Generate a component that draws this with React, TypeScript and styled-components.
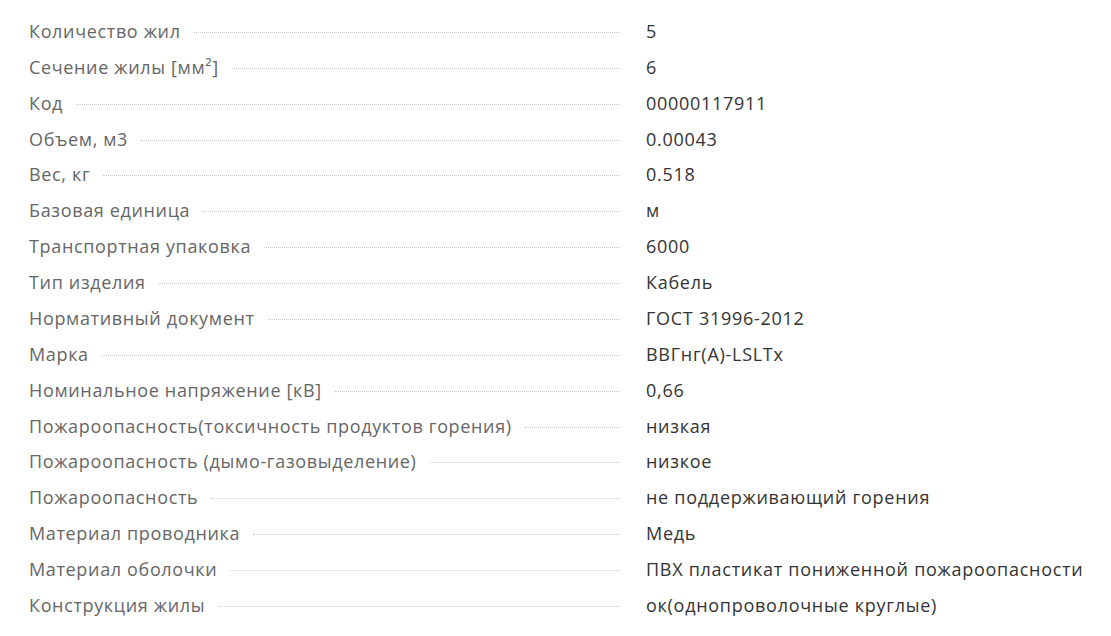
import styled, { createGlobalStyle } from "styled-components";

const GlobalStyle = createGlobalStyle`
  body {
    margin: 0;
    background: #fff;
    font-family: "Open Sans", "Noto Sans", sans-serif;
  }
`;

const specs: [string, string][] = [
  ["Количество жил", "5"],
  ["Сечение жилы [мм²]", "6"],
  ["Код", "00000117911"],
  ["Объем, м3", "0.00043"],
  ["Вес, кг", "0.518"],
  ["Базовая единица", "м"],
  ["Транспортная упаковка", "6000"],
  ["Тип изделия", "Кабель"],
  ["Нормативный документ", "ГОСТ 31996-2012"],
  ["Марка", "ВВГнг(А)-LSLTx"],
  ["Номинальное напряжение [кВ]", "0,66"],
  ["Пожароопасность(токсичность продуктов горения)", "низкая"],
  ["Пожароопасность (дымо-газовыделение)", "низкое"],
  ["Пожароопасность", "не поддерживающий горения"],
  ["Материал проводника", "Медь"],
  ["Материал оболочки", "ПВХ пластикат пониженной пожароопасности"],
  ["Конструкция жилы", "ок(однопроволочные круглые)"],
];

export default function App() {
  return (
    <>
      <GlobalStyle />
      <SpecList>
        {specs.map(([name, value]) => (
          <Row key={name}>
            <Name>
              <NameText>{name}</NameText>
              <Dots />
            </Name>
            <Value>{value}</Value>
          </Row>
        ))}
      </SpecList>
    </>
  );
}

const SpecList = styled.div`
  padding: 13px 0 0 29px;
  display: flex;
  flex-direction: column;
`;

const Row = styled.div`
  display: grid;
  grid-template-columns: 590px 1fr;
  column-gap: 27px;
  height: 35.875px;
  align-items: center;
  font-size: 18px;
  letter-spacing: 0.65px;
`;

const Name = styled.div`
  display: flex;
  align-items: center;
  color: #666;
`;

const NameText = styled.span`
  white-space: nowrap;
`;

const Dots = styled.span`
  flex: 1;
  margin: 3px 0 0 13px;
  border-bottom: 1px dotted #c8c8c8;
`;

const Value = styled.div`
  color: #333;
  white-space: nowrap;
  letter-spacing: 0.72px;
`;
